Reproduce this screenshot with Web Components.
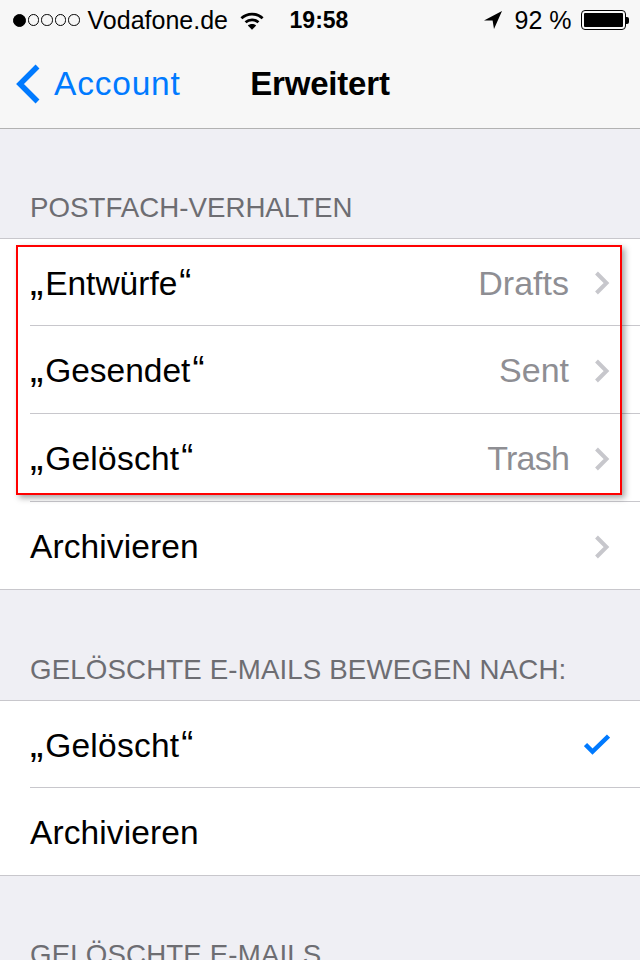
<!DOCTYPE html>
<html><head><meta charset="utf-8">
<style>
html,body{margin:0;padding:0;background:#efeff4;}
body{width:640px;height:960px;overflow:hidden;position:relative;font-family:"Liberation Sans",Arial,sans-serif;color:#000;}
</style></head><body>
<ios-status></ios-status>
<ios-nav back="Account" title="Erweitert"></ios-nav>
<set-section title="POSTFACH-VERHALTEN" style="--head:109px">
  <set-row label="Entwürfe" quoted value="Drafts" chevron first></set-row>
  <set-row label="Gesendet" quoted value="Sent" chevron></set-row>
  <set-row label="Gelöscht" quoted value="Trash" chevron style="--vs:-.8px;--ws:.25px"></set-row>
  <set-row label="Archivieren" chevron last style="--ws:.1px"></set-row>
</set-section>
<set-section title="GELÖSCHTE E-MAILS BEWEGEN NACH:" style="--head:110px;--hs:.13px">
  <set-row label="Gelöscht" quoted check first style="--ws:.25px"></set-row>
  <set-row label="Archivieren" last style="--ws:.1px"></set-row>
</set-section>
<set-section title="GELÖSCHTE E-MAILS" style="--head:109px;--hs:.13px"></set-section>
<red-callout></red-callout>
<script>
function def(name,html){customElements.define(name,class extends HTMLElement{connectedCallback(){if(this.shadowRoot)return;const r=this.attachShadow({mode:'open'});r.innerHTML=typeof html==='function'?html(this):html;}});}
def('ios-status',`<style>
:host{display:flex;align-items:center;height:40px;background:#f7f7f7;font-size:25px;color:#000;padding:0 0 0 13px;box-sizing:border-box}
.dots{display:flex;gap:2px;align-items:center;margin-right:8px}
.d{width:11.4px;height:11.4px;border:1px solid #000;border-radius:50%;box-sizing:border-box}
.d.f{background:#000;width:13px;height:13px}
.car{width:152px}
.wifi{width:24px;height:19px;display:block}
.time{margin-left:26px;font-weight:700;width:194px;font-size:23px}
.loc{width:18px;height:18px;display:block;margin-right:13px}
.pct{width:66px}
.bat{display:flex;align-items:center}
.b{width:45px;height:20px;border:1px solid #000;border-radius:4px;box-sizing:border-box;padding:2px;display:flex}
.b i{display:block;width:100%;background:#000;border-radius:1px}
.t{width:3px;height:7px;background:#000;border-radius:0 2px 2px 0}
</style>
<span class="dots"><span class="d f"></span><span class="d"></span><span class="d"></span><span class="d"></span><span class="d"></span></span>
<span class="car">Vodafone.de</span>
<svg class="wifi" viewBox="0 0 26 20"><path d="M1.5 7.5C8 1.5 18 1.5 24.5 7.5" fill="none" stroke="#000" stroke-width="3"/><path d="M6 12C10 8.3 16 8.3 20 12" fill="none" stroke="#000" stroke-width="3"/><path d="M13 20L8.5 15.5C11 13.3 15 13.3 17.5 15.5Z"/></svg>
<span class="time">19:58</span>
<svg class="loc" viewBox="0 0 18 18"><path d="M18 0L0 9.5L8.6 9.6L10 18Z"/></svg>
<span class="pct">92 %</span>
<span class="bat"><span class="b"><i></i></span><span class="t"></span></span>`);
def('ios-nav',t=>`<style>
:host{display:block;height:89px;background:#f7f7f7;border-bottom:1px solid #b2b2b2;box-sizing:border-box}
.bar{display:grid;grid-template-columns:1fr auto 1fr;align-items:center;height:88px}
.back{display:flex;align-items:center;color:#007aff;font-size:33.5px;letter-spacing:.8px;padding-left:15px;gap:14px}
.back svg{width:25px;height:40px;display:block}
.title{font-weight:700;font-size:33px;letter-spacing:-.2px}
</style><div class="bar"><div class="back"><svg viewBox="0 0 25 40"><path d="M22.5 2.5L5 20L22.5 37.5" fill="none" stroke="#007aff" stroke-width="5.5"/></svg><span>${t.getAttribute('back')}</span></div><div class="title">${t.getAttribute('title')}</div><div></div></div>`);
def('set-section',t=>`<style>
:host{display:block}
.h{height:var(--head);box-sizing:border-box;display:flex;align-items:flex-end;padding:0 30px 14px;font-size:27.7px;letter-spacing:var(--hs,0);color:#6d6d72;white-space:nowrap}
.g{background:#fff;border-top:1px solid #c8c7cc;border-bottom:1px solid #c8c7cc}
</style><div class="h">${t.getAttribute('title')}</div><div class="g"><slot></slot></div>`);
def('set-row',t=>{
const lab=t.getAttribute('label');
const q=t.hasAttribute('quoted');
const text=q?`<span class="o">„</span><span class="w">${lab}</span><span class="e">“</span>`:`<span class="w">${lab}</span>`;
return `<style>
:host{display:block;background:#fff}
.r{height:${t.hasAttribute('first')?86:87}px;margin-left:30px;display:flex;align-items:center;padding-right:30px;font-size:33.5px;${t.hasAttribute('last')?'':'border-bottom:1px solid #c8c7cc;'}}
.l{flex:1;padding-top:2px;line-height:38px}
.l.q{padding:0 0 1px}
.o{font-size:40px;line-height:1;letter-spacing:1.8px}
.w{letter-spacing:var(--ws,0)}
.e{font-size:36px;line-height:1;margin-left:2px}
.v{color:#8e8e93;font-size:34px;padding-top:2px;letter-spacing:var(--vs,0)}
svg{display:block}
.c{margin:2px 0 0 25px}
</style><div class="r"><span class="l${q?' q':''}">${text}</span>${t.getAttribute('value')?`<span class="v">${t.getAttribute('value')}</span>`:''}${t.hasAttribute('chevron')?`<svg class="c" width="16" height="24" viewBox="0 0 16 24"><path d="M2.5 2L12.5 12L2.5 22" fill="none" stroke="#c7c7cc" stroke-width="4"/></svg>`:''}${t.hasAttribute('check')?`<svg width="26" height="21" viewBox="0 0 26 21"><path d="M1.5 10.5L8.5 17.5L24.5 2" fill="none" stroke="#007aff" stroke-width="4.5"/></svg>`:''}</div>`;});
def('red-callout',`<style>
:host{display:block;position:absolute;left:16px;top:245px;width:606px;height:250px;box-sizing:border-box;border:2px solid #f00;box-shadow:3px 3px 6px rgba(0,0,0,.35)}
</style>`);
</script>
</body></html>
